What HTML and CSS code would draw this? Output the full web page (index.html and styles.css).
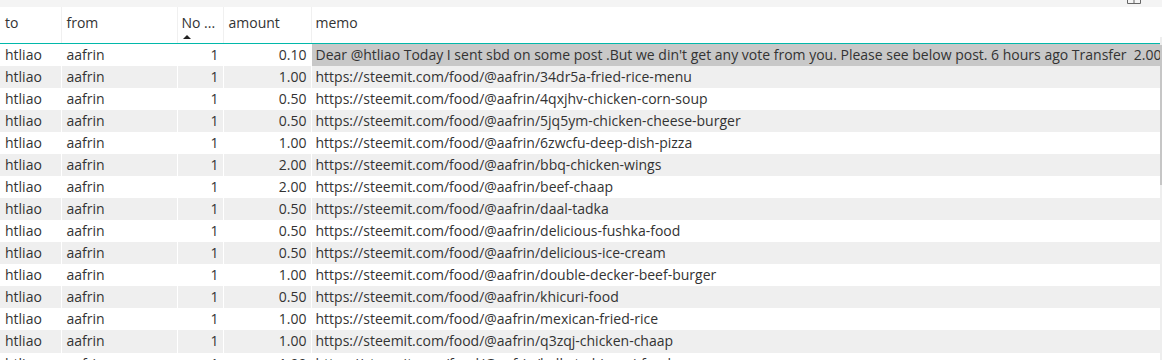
FILE: index.html
```html
<!DOCTYPE html>
<html>
<head>
<meta charset="utf-8">
<link rel="stylesheet" href="styles.css">
</head>
<body>
<div class="page">
  <div class="topbar">
    <svg class="focus-icon" width="14" height="6" viewBox="0 0 14 6"><path d="M0.5 -2 V3.5 H13.5 V-2 M7 -2 V3.5" fill="none" stroke="#666" stroke-width="1"/></svg>
  </div>
  <div class="table-wrap">
    <table class="grid">
      <colgroup>
        <col class="c-to"><col class="c-from"><col class="c-no"><col class="c-amt"><col class="c-memo">
      </colgroup>
      <thead>
        <tr>
          <th>to</th>
          <th>from</th>
          <th class="sorted">No ...<span class="arrow"></span></th>
          <th>amount</th>
          <th class="memo">memo</th>
        </tr>
      </thead>
      <tbody id="rows">
        <tr><td>htliao</td><td>aafrin</td><td class="num">1</td><td class="num">0.10</td><td class="sel">Dear @htliao Today I sent sbd on some post .But we din't get any vote from you. Please see below post. 6 hours ago Transfer&nbsp; 2.000 SBD to htliao</td></tr>
        <tr><td>htliao</td><td>aafrin</td><td class="num">1</td><td class="num">1.00</td><td>https://steemit.com/food/@aafrin/34dr5a-fried-rice-menu</td></tr>
        <tr><td>htliao</td><td>aafrin</td><td class="num">1</td><td class="num">0.50</td><td>https://steemit.com/food/@aafrin/4qxjhv-chicken-corn-soup</td></tr>
        <tr><td>htliao</td><td>aafrin</td><td class="num">1</td><td class="num">0.50</td><td>https://steemit.com/food/@aafrin/5jq5ym-chicken-cheese-burger</td></tr>
        <tr><td>htliao</td><td>aafrin</td><td class="num">1</td><td class="num">1.00</td><td>https://steemit.com/food/@aafrin/6zwcfu-deep-dish-pizza</td></tr>
        <tr><td>htliao</td><td>aafrin</td><td class="num">1</td><td class="num">2.00</td><td>https://steemit.com/food/@aafrin/bbq-chicken-wings</td></tr>
        <tr><td>htliao</td><td>aafrin</td><td class="num">1</td><td class="num">2.00</td><td>https://steemit.com/food/@aafrin/beef-chaap</td></tr>
        <tr><td>htliao</td><td>aafrin</td><td class="num">1</td><td class="num">0.50</td><td>https://steemit.com/food/@aafrin/daal-tadka</td></tr>
        <tr><td>htliao</td><td>aafrin</td><td class="num">1</td><td class="num">0.50</td><td>https://steemit.com/food/@aafrin/delicious-fushka-food</td></tr>
        <tr><td>htliao</td><td>aafrin</td><td class="num">1</td><td class="num">0.50</td><td>https://steemit.com/food/@aafrin/delicious-ice-cream</td></tr>
        <tr><td>htliao</td><td>aafrin</td><td class="num">1</td><td class="num">1.00</td><td>https://steemit.com/food/@aafrin/double-decker-beef-burger</td></tr>
        <tr><td>htliao</td><td>aafrin</td><td class="num">1</td><td class="num">0.50</td><td>https://steemit.com/food/@aafrin/khicuri-food</td></tr>
        <tr><td>htliao</td><td>aafrin</td><td class="num">1</td><td class="num">1.00</td><td>https://steemit.com/food/@aafrin/mexican-fried-rice</td></tr>
        <tr><td>htliao</td><td>aafrin</td><td class="num">1</td><td class="num">1.00</td><td>https://steemit.com/food/@aafrin/q3zqj-chicken-chaap</td></tr>
        <tr><td>htliao</td><td>aafrin</td><td class="num">1</td><td class="num">1.00</td><td>https://steemit.com/food/@aafrin/kolkata-biryani-food</td></tr>
      </tbody>
    </table>
    <div class="scrollbar"><div class="thumb"></div></div>
  </div>
</div>
</body>
</html>
```
FILE: styles.css
```css
* { box-sizing: border-box; }
html, body {
  margin: 0;
  padding: 0;
  background: #ffffff;
  overflow: hidden;
}
body {
  font-family: "Segoe UI", "Open Sans", "Liberation Sans", Arial, sans-serif;
  color: #333333;
  width: 1162px;
  height: 360px;
}
.page {
  width: 1162px;
  height: 360px;
  overflow: hidden;
}
.topbar {
  height: 7px;
  background: #f4f4f4;
  position: relative;
}
.focus-icon {
  position: absolute;
  left: 1127px;
  top: 0;
}
.table-wrap {
  display: flex;
  width: 1162px;
}
.grid {
  width: 1160px;
  table-layout: fixed;
  border-collapse: collapse;
  font-size: 14px;
}
.c-to { width: 61px; }
.c-from { width: 116px; }
.c-no { width: 46px; }
.c-amt { width: 88px; }
.c-memo { width: 849px; }
th {
  height: 36px;
  padding: 6px 5px 0 5px;
  vertical-align: top;
  text-align: left;
  font-weight: normal;
  font-size: 14px;
  line-height: 20px;
  white-space: nowrap;
  overflow: hidden;
  border-right: 1px solid #f0f0f0;
  border-bottom: 1px solid #01b8aa;
  position: relative;
}
th:last-child { border-right: none; }
th.sorted { padding-left: 4px; }
th.memo { padding-left: 4px; }
.arrow {
  position: absolute;
  left: 5px;
  top: 28px;
  width: 0;
  height: 0;
  border-left: 4px solid transparent;
  border-right: 4px solid transparent;
  border-bottom: 4px solid #222;
}
tbody tr { height: 22.08px; }
td {
  padding: 0 5px;
  line-height: 22px;
  white-space: nowrap;
  overflow: hidden;
  border-right: 1px solid #ffffff;
}
td:last-child { border-right: none; padding-left: 4px; }
td.num { text-align: right; padding-right: 4px; }
tbody tr:nth-child(even) td { background: #efefef; }
td.sel { background: #c8c8c8; }
.scrollbar {
  width: 2px;
  background: #eeeeee;
  margin-top: 30px;
  height: 330px;
  position: relative;
}
.thumb {
  width: 2px;
  height: 140px;
  margin-top: 8px;
  background: #c6c6c6;
}
```
